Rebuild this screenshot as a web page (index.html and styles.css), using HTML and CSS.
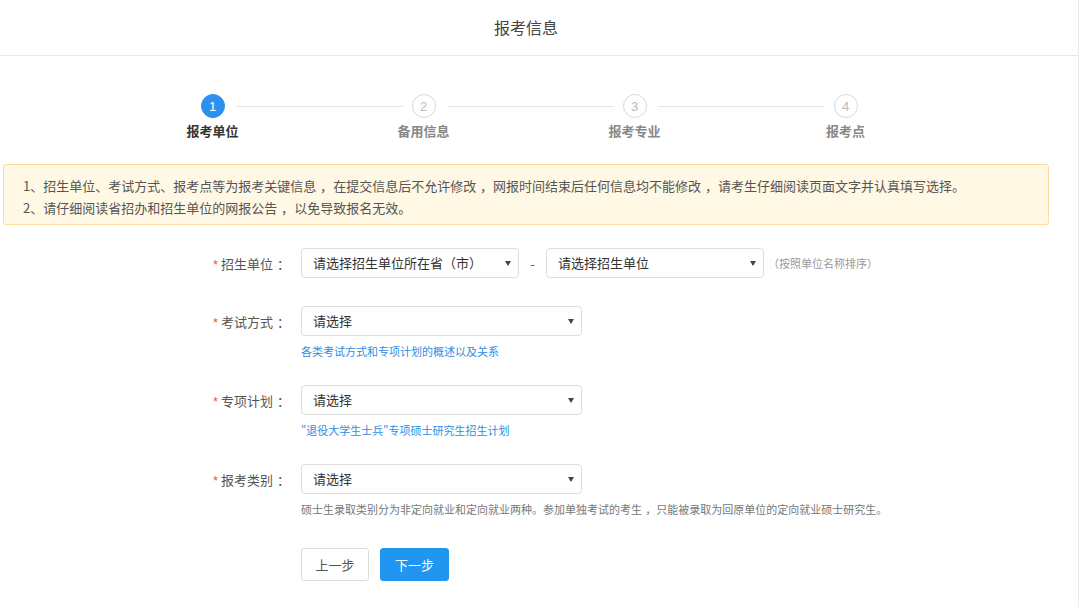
FILE: index.html
```html
<!DOCTYPE html>
<html lang="zh-CN">
<head>
<meta charset="utf-8">
<title>报考信息</title>
<link rel="stylesheet" href="styles.css">
</head>
<body>
<div class="page">
  <header class="header">报考信息</header>
  <div class="wrap">
    <ol class="steps">
      <li class="step active"><span class="num">1</span><span class="name">报考单位</span></li>
      <li class="step"><span class="num">2</span><span class="name">备用信息</span></li>
      <li class="step"><span class="num">3</span><span class="name">报考专业</span></li>
      <li class="step last"><span class="num">4</span><span class="name">报考点</span></li>
    </ol>
    <div class="alert">
      <p>1、招生单位、考试方式、报考点等为报考关键信息<span class="pc">，</span>在提交信息后不允许修改<span class="pc">，</span>网报时间结束后任何信息均不能修改<span class="pc">，</span>请考生仔细阅读页面文字并认真填写选择。</p>
      <p>2、请仔细阅读省招办和招生单位的网报公告<span class="pc">，</span>以免导致报名无效。</p>
    </div>
    <form class="form">
      <div class="row first">
        <label class="label"><span class="star">*</span>招生单位<span class="pc">：</span></label>
        <div class="field">
          <div class="inline">
            <div class="select sm">请选择招生单位所在省（市）</div>
            <span class="dash">-</span>
            <div class="select sm">请选择招生单位</div>
            <span class="note">（按照单位名称排序）</span>
          </div>
        </div>
      </div>
      <div class="row">
        <label class="label"><span class="star">*</span>考试方式<span class="pc">：</span></label>
        <div class="field">
          <div class="select">请选择</div>
          <a class="link">各类考试方式和专项计划的概述以及关系</a>
        </div>
      </div>
      <div class="row">
        <label class="label"><span class="star">*</span>专项计划<span class="pc">：</span></label>
        <div class="field">
          <div class="select">请选择</div>
          <a class="link">"退役大学生士兵"专项硕士研究生招生计划</a>
        </div>
      </div>
      <div class="row">
        <label class="label"><span class="star">*</span>报考类别<span class="pc">：</span></label>
        <div class="field">
          <div class="select">请选择</div>
          <span class="help">硕士生录取类别分为非定向就业和定向就业两种。参加单独考试的考生<span class="pc">，</span>只能被录取为回原单位的定向就业硕士研究生。</span>
        </div>
      </div>
      <div class="actions">
        <button type="button" class="btn">上一步</button>
        <button type="button" class="btn primary">下一步</button>
      </div>
    </form>
  </div>
</div>
</body>
</html>
```
FILE: styles.css
```css
* { box-sizing: border-box; }
html, body { margin: 0; padding: 0; background: #fff; }
body {
  font-family: "Noto Sans CJK SC", "Noto Sans", sans-serif;
  font-size: 13px;
  color: #555;
  height: 607px;
  overflow: hidden;
}
.pc { padding-left: 0.3em; }
.page {
  width: 1079px;
  height: 607px;
  border-right: 1px solid #ececec;
}
.header {
  height: 56px;
  border-bottom: 1px solid #e8e8e8;
  display: flex;
  align-items: center;
  justify-content: center;
  font-size: 16px;
  color: #444;
  padding-right: 26px;
  padding-bottom: 1px;
}
.wrap { width: 1052px; }
.steps {
  list-style: none;
  margin: 0;
  padding: 38px 0 0 107px;
  display: grid;
  grid-template-columns: repeat(4, 211px);
  height: 108px;
}
.step {
  position: relative;
  display: flex;
  flex-direction: column;
  align-items: center;
}
.step .num {
  width: 24px;
  height: 24px;
  border-radius: 50%;
  border: 1px solid #d9d9d9;
  color: #bbb;
  font-family: "Liberation Sans", Arial, sans-serif;
  font-size: 13px;
  display: flex;
  align-items: center;
  justify-content: center;
  background: #fff;
}
.step::after {
  content: "";
  position: absolute;
  top: 12px;
  left: calc(50% + 23px);
  width: 167px;
  height: 1px;
  background: #e6e6e6;
}
.step.last::after { display: none; }
.step .name {
  margin-top: 5px;
  font-size: 13px;
  font-weight: bold;
  color: #888;
  line-height: 16px;
}
.step.active .num {
  background: #2d8ff0;
  border-color: #2d8ff0;
  color: #fff;
}
.step.active .name { color: #333; }
.alert {
  margin: 0 0 0 3px;
  width: 1046px;
  height: 61px;
  background: #fff8e4;
  border: 1px solid #fbdc98;
  border-radius: 3px;
  padding: 10px 0 0 19px;
  font-size: 13px;
  color: #555;
}
.alert p { margin: 0; line-height: 22px; }
.form {
  margin-top: 23px;
  padding-left: 200px;
}
.row {
  display: flex;
  margin-bottom: 26px;
}
.row.first { margin-bottom: 28px; }
.label {
  width: 101px;
  flex: none;
  height: 30px;
  line-height: 32px;
  padding-left: 13px;
  color: #555;
  font-size: 13px;
  white-space: nowrap;
}
.star {
  color: #f25b2a;
  margin-right: 3px;
  font-family: "Liberation Sans", Arial, sans-serif;
}
.field { display: flex; flex-direction: column; align-items: flex-start; }
.inline { display: flex; align-items: center; }
.select {
  position: relative;
  width: 281px;
  height: 30px;
  border: 1px solid #ddd;
  border-radius: 4px;
  padding-left: 11px;
  line-height: 28px;
  color: #333;
  font-size: 13px;
}
.select.sm { width: 218px; }
.select::after {
  content: "";
  position: absolute;
  right: 7px;
  top: 12px;
  border-left: 3px solid transparent;
  border-right: 3px solid transparent;
  border-top: 5px solid #444;
}
.dash {
  width: 27px;
  text-align: center;
  color: #666;
}
.note {
  margin-left: 4px;
  font-size: 11px;
  color: #999;
}
.link {
  margin-top: 7px;
  line-height: 16px;
  font-size: 11px;
  color: #2e8ee6;
}
.help {
  margin-top: 7px;
  line-height: 16px;
  font-size: 11px;
  color: #777;
  white-space: nowrap;
}
.actions {
  padding-left: 101px;
  display: flex;
  gap: 11px;
  margin-top: 31px;
}
.btn {
  width: 68px;
  height: 33px;
  border: 1px solid #ddd;
  border-radius: 3px;
  background: #fff;
  color: #555;
  font-family: "Noto Sans CJK SC", sans-serif;
  font-size: 13px;
  padding: 0;
}
.btn.primary {
  width: 69px;
  background: #2196f0;
  border-color: #2196f0;
  color: #fff;
}
```
